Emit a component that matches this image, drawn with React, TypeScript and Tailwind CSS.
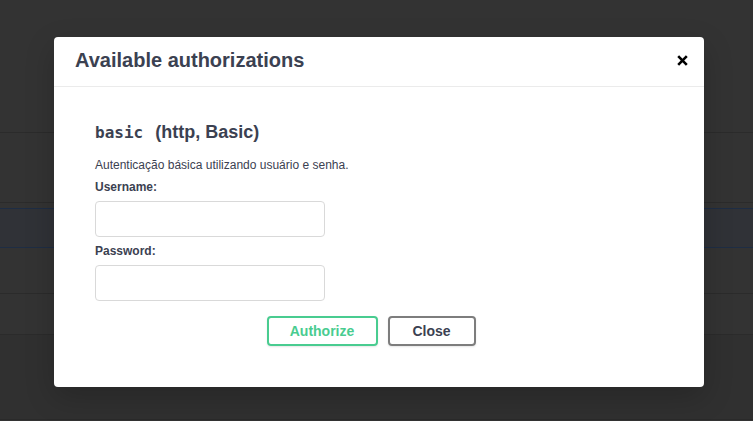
import React from "react";

export default function App() {
  const sans = { fontFamily: '"Liberation Sans", Arial, sans-serif' };
  return (
    <div className="relative w-[753px] h-[421px] overflow-hidden bg-[#333333]" style={sans}>
      {/* background page (dimmed) */}
      <div className="flex flex-col h-full">
        <div className="h-[133px] shrink-0 border-b border-[#2b2b2b]" />
        <div className="h-[70px] shrink-0 border-b border-[#2b2b2b]" />
        <div className="h-[5px] shrink-0" />
        <div className="h-[40px] shrink-0 border-y border-[#1e2d44] bg-[#303237]" />
        <div className="h-[46px] shrink-0 border-b border-[#2b2b2b]" />
        <div className="h-[41px] shrink-0 border-b border-[#2b2b2b]" />
        <div className="h-[85px] shrink-0 border-b border-[#2a2a2a] bg-[#303030]" />
        <div className="flex-1" />
      </div>

      {/* modal */}
      <div className="absolute left-[54px] top-[37px] w-[650px] h-[350px] bg-white rounded-[4px] shadow-[0_10px_30px_rgba(0,0,0,0.2)] flex flex-col">
        <div className="h-[50px] shrink-0 border-b border-[#ebebeb] flex items-center justify-between pl-[21px] pr-[16px]">
          <h3 className="text-[20px] font-bold text-[#3b4151] leading-[24px] mt-[-3px]">Available authorizations</h3>
          <svg width="11" height="11" viewBox="0 0 11 11" className="mt-[-3px]">
            <path d="M1.2 1.2 L9.8 9.8 M9.8 1.2 L1.2 9.8" stroke="#000" strokeWidth="2.6" strokeLinecap="butt" />
          </svg>
        </div>
        <div className="flex flex-col pl-[41px] pr-[20px] pt-[33px]">
          <h4 className="text-[18px] font-bold text-[#3b4151] leading-[24px] flex items-baseline">
            <code className="text-[16px] mr-[12px]" style={{ fontFamily: '"DejaVu Sans Mono", "Liberation Mono", monospace' }}>basic</code>
            <span>(http, Basic)</span>
          </h4>
          <p className="mt-[12px] text-[12px] leading-[16px] text-[#3b4151]">Autenticação básica utilizando usuário e senha.</p>
          <label className="mt-[6px] text-[12px] leading-[16px] font-bold text-[#3b4151]">Username:</label>
          <input className="mt-[6px] w-[230px] h-[36px] border border-[#d9d9d9] rounded-[4px] px-[10px] text-[14px] outline-none bg-white" />
          <label className="mt-[6px] text-[12px] leading-[16px] font-bold text-[#3b4151]">Password:</label>
          <input type="password" className="mt-[6px] w-[230px] h-[36px] border border-[#d9d9d9] rounded-[4px] px-[10px] text-[14px] outline-none bg-white" />
        </div>
        <div className="flex justify-center mt-[15px] pr-[16px] gap-[10px]">
          <button className="w-[111px] h-[30px] border-2 border-[#49cc90] rounded-[4px] text-[#49cc90] text-[14px] font-bold shadow-[0_1px_2px_rgba(0,0,0,0.1)]">Authorize</button>
          <button className="w-[88px] h-[30px] border-2 border-[#7d7d7d] rounded-[4px] text-[#3b4151] text-[14px] font-bold shadow-[0_1px_2px_rgba(0,0,0,0.1)]">Close</button>
        </div>
      </div>
    </div>
  );
}
